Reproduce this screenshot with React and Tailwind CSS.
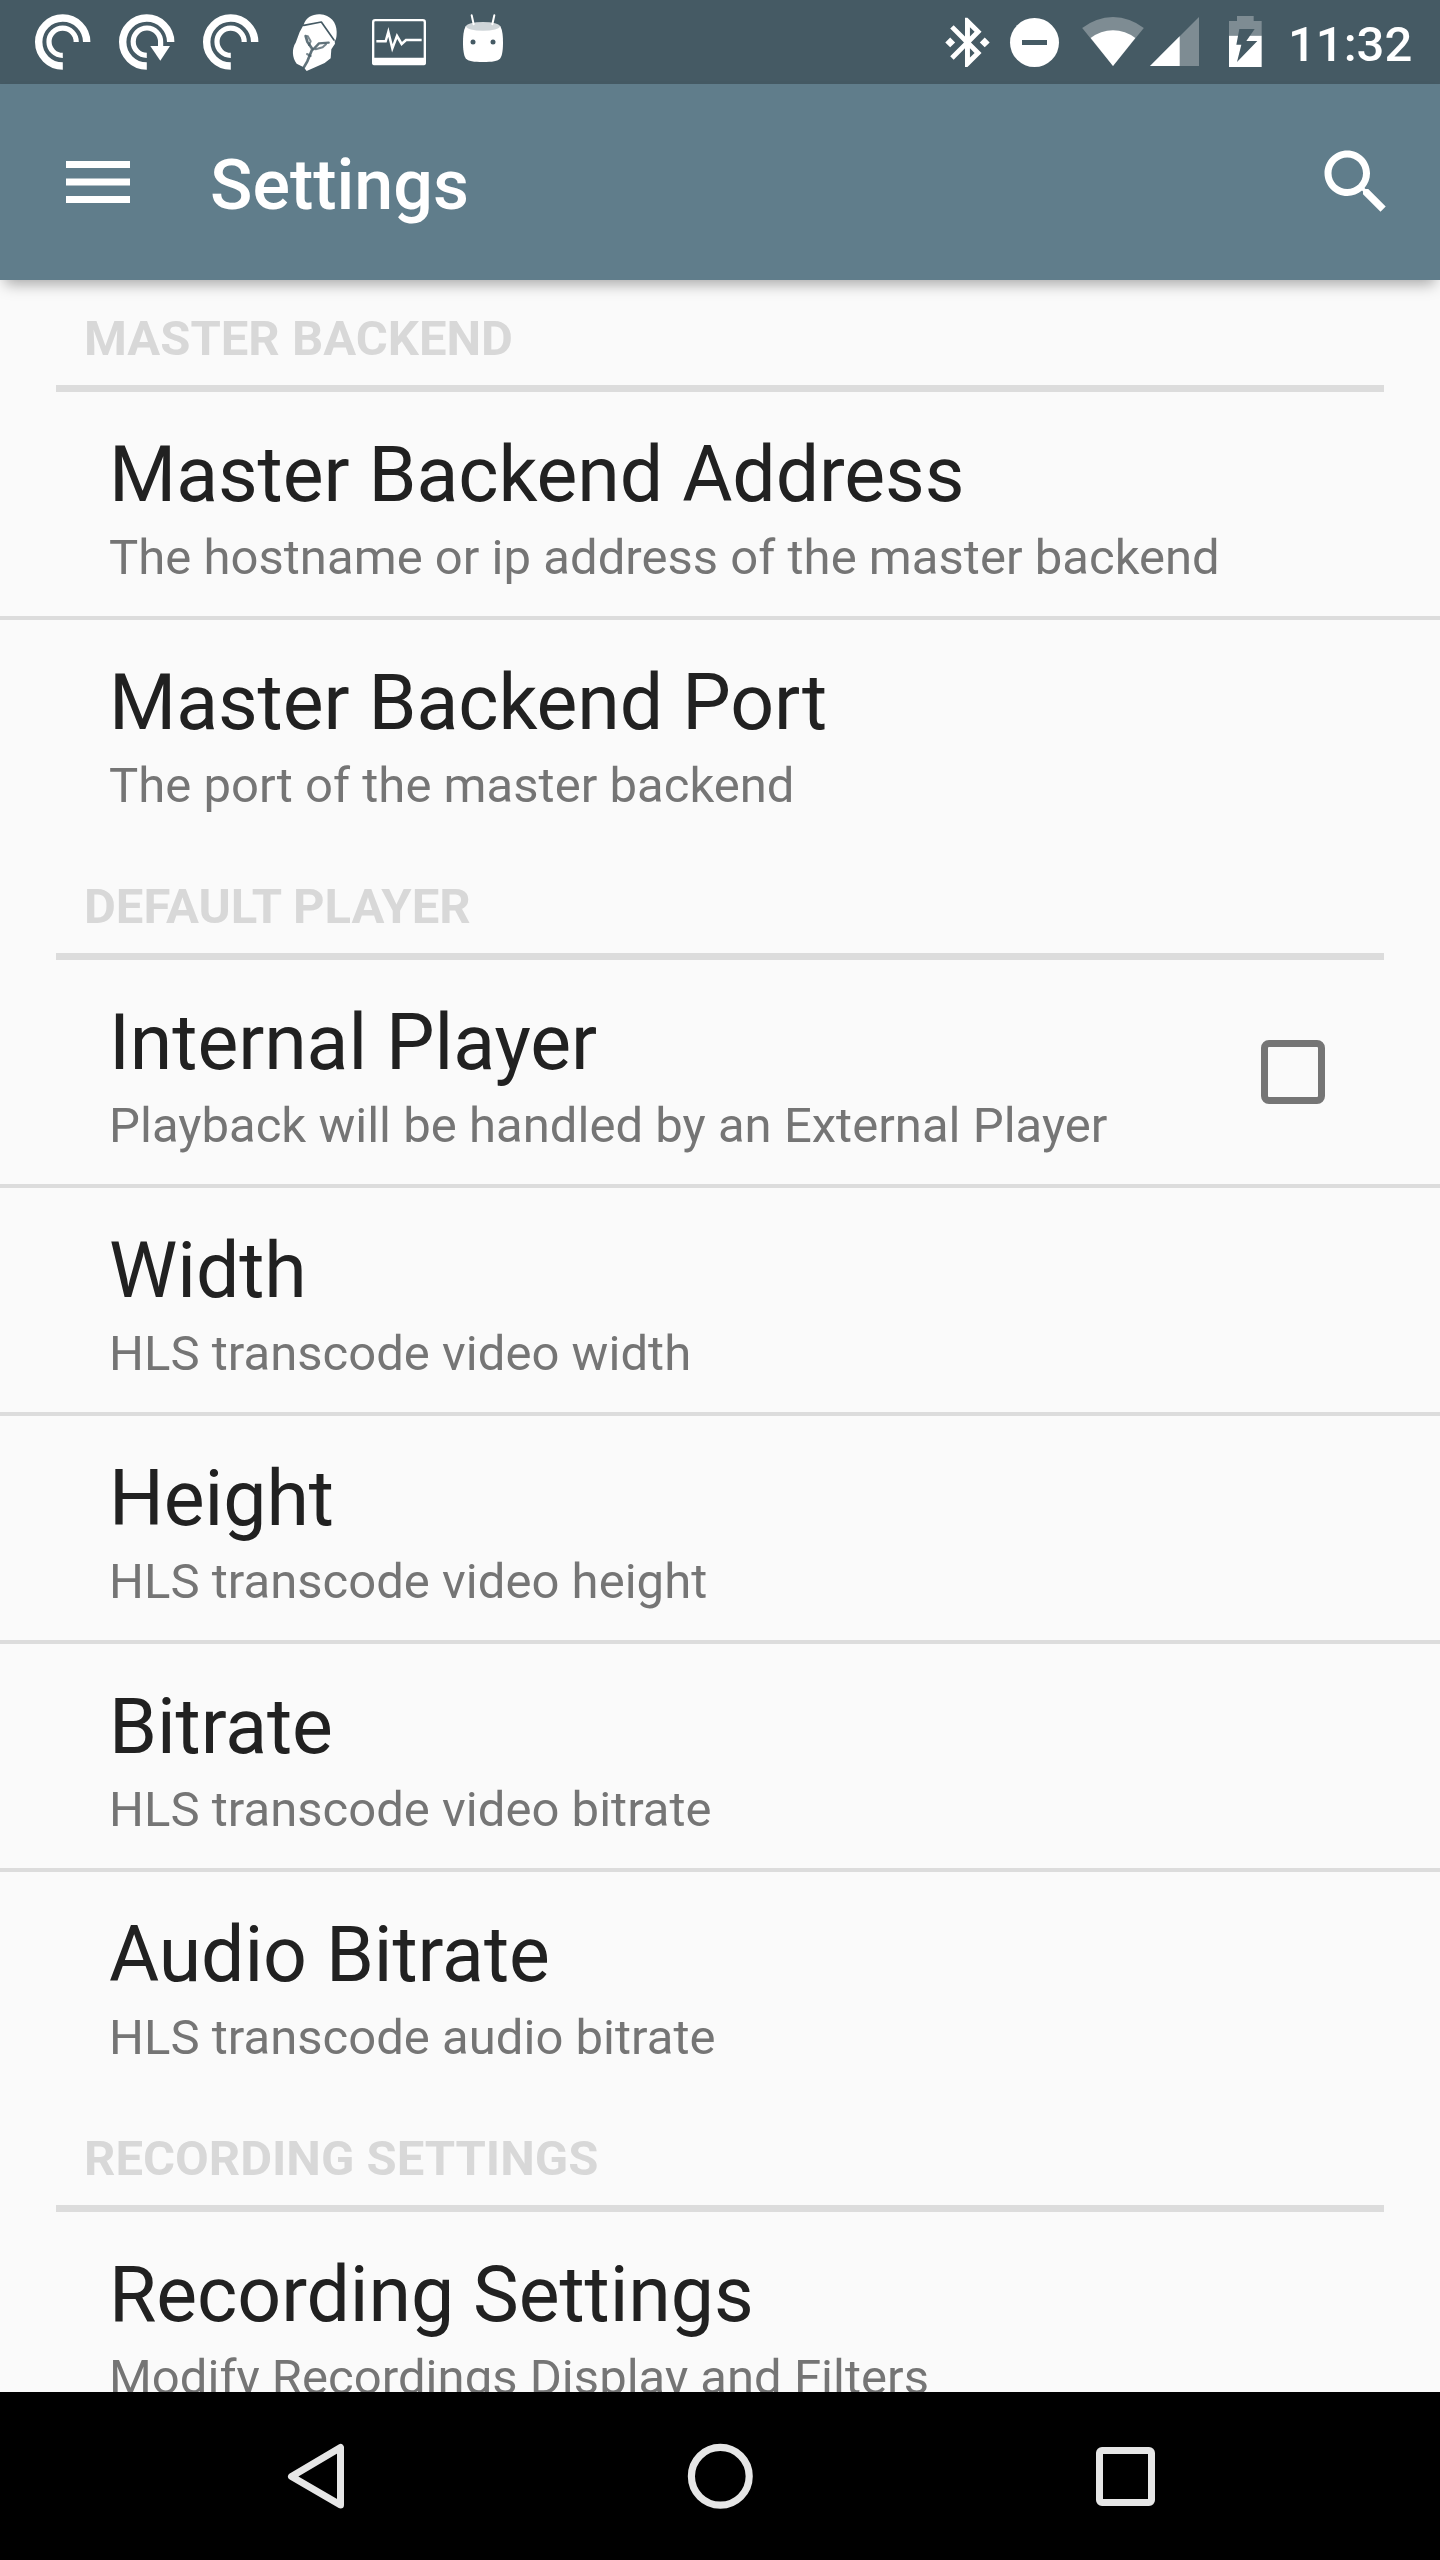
const BAR = '#455a64';
const DIM = '#7e8c93';

function CastRing({ arrow }) {
  return (
    <svg className="h-[84px] w-[84px]" viewBox="0 0 84 84" fill="none" stroke="#fff">
      <path d="M65.7 42A24 24 0 1 0 41.8 66" strokeWidth="7.4" />
      <path d={arrow ? 'M55.6 48V42A13.7 13.7 0 1 0 41.8 55.4' : 'M55.2 42A13.6 13.6 0 1 0 41.8 55.4'} strokeWidth="5.2" />
      {arrow && <path d="M45.3 46H65L55.3 60.8Z" fill="#fff" stroke="none" />}
    </svg>
  );
}

function HelmetIcon() {
  return (
    <svg className="h-[84px] w-[84px]" viewBox="9 0 252 252">
      <path
        fill="#fff"
        d="M101 74C108 52 128 42 150 43C182 45 200 68 200 95C200 110 199 117 194 124L195 131L184 148L182 175L164 189L110 213L101 202L80 191C66 172 65 146 77 128L89 96Z"
      />
      <g fill="none" stroke={BAR} strokeLinejoin="round" strokeLinecap="round">
        <path d="M101 76L154 66L192 120" strokeWidth="5" />
        <path d="M107 108L112 125L127 147L112 184L101 203" strokeWidth="8" opacity=".85" />
        <path d="M113 108L122 124L117 135" strokeWidth="6" opacity=".7" />
        <path d="M130 148L147 130L176 128" strokeWidth="7" opacity=".85" />
        <path d="M137 148L158 142L168 133" strokeWidth="6" opacity=".75" />
        <path d="M111 162L122 168" strokeWidth="6" opacity=".7" />
      </g>
    </svg>
  );
}

function MonitorIcon() {
  return (
    <svg className="h-[84px] w-[84px]" viewBox="261 0 252 252">
      <rect x="309.5" y="60.500" width="155" height="132" rx="6" fill="none" stroke="#fff" strokeWidth="7" />
      <rect x="307" y="173" width="160" height="22" rx="5" fill="#fff" />
      <path d="M319 124H347L355 96L367 145L381 108L395 132L408 120H455" fill="none" stroke="#fff" strokeWidth="7.500" />
    </svg>
  );
}

function RobotIcon() {
  return (
    <svg className="h-[84px] w-[84px]" viewBox="513 0 252 252">
      <path d="M587 78C580 92 579 110 579 128C579 148 581 165 587 175C594 185 612 186 639 186C666 186 684 185 691 175C697 165 699 148 699 128C699 110 698 92 691 78Z" fill="#fff" />
      <ellipse cx="639" cy="79" rx="51" ry="13" fill="#cfd5d8" />
      <path d="M605 46L611 73M673 46L667 73" stroke="#fff" strokeWidth="6" strokeLinecap="round" />
      <circle cx="609" cy="126" r="7.500" fill={BAR} />
      <circle cx="669" cy="126" r="7.500" fill={BAR} />
    </svg>
  );
}

function StatusBar() {
  return (
    <div className="flex h-[84px] shrink-0 items-center bg-[#455a64] pl-[21px] text-white">
      <CastRing />
      <CastRing arrow />
      <CastRing />
      <HelmetIcon />
      <MonitorIcon />
      <RobotIcon />
      <svg className="ml-[420px] h-[84px] w-[45px]" viewBox="75 0 135 252" fill="#fff">
        <path
          transform="translate(53.6 38.4) scale(7.4)"
          d="M7 12l-2-2-2 2 2 2 2-2zm10.710-4.290L12 2h-1v7.590L6.410 5 5 6.410 10.590 12 5 17.590 6.410 19 11 14.410V22h1l5.710-5.710-4.300-4.290 4.300-4.290zM13 5.830l1.880 1.880L13 9.590V5.830zm1.880 10.460L13 18.170v-3.760l1.880 1.880zM19 10l-2 2 2 2 2-2-2-2z"
        />
      </svg>
      <svg className="ml-[19px] h-[84px] w-[51px]" viewBox="267 0 153 252">
        <circle cx="343.500" cy="127.500" r="73.500" fill="#fff" />
        <path d="M306 120H381V135H306Z" fill={BAR} />
      </svg>
      <svg className="ml-[21px] h-[84px] w-[64px]" viewBox="483 0 192 252">
        <path d="M579 198L486.500 84A147 147 0 0 1 671.500 84Z" fill={DIM} />
        <path d="M579 198L512 114A108 108 0 0 1 646 114Z" fill="#fff" />
      </svg>
      <svg className="ml-[4px] h-[84px] w-[50px]" viewBox="687 0 150 252">
        <path d="M690 198L837 51V198Z" fill={DIM} />
        <path d="M690 198L779 109V198Z" fill="#fff" />
      </svg>
      <svg className="ml-[29px] h-[84px] w-[35px]" viewBox="144 0 105 252">
        <path d="M147 107V63H171V48H221V63H245V107Z" fill={DIM} />
        <path d="M147 107H245V201H147Z" fill="#fff" />
        <path d="M178 87H224L199 123H232L171 186L184 134H169Z" fill={BAR} />
      </svg>
      <span className="ml-[25px] mt-[6px] text-[49px] leading-[58px] font-medium">11:32</span>
    </div>
  );
}

function Toolbar() {
  return (
    <header className="z-10 flex h-[196px] shrink-0 items-center bg-[#607d8b] pr-[42px] pl-[66px] text-white shadow-[0_9px_14px_-5px_rgba(0,0,0,0.34)]">
      <svg className="h-[42px] w-[64px]" viewBox="0 0 64 42" fill="#fff">
        <path d="M0 0H64V7H0ZM0 17.500H64V24.500H0ZM0 35H64V42H0Z" />
      </svg>
      <h1 className="ml-[80px] mt-[6px] text-[70px] leading-[82px] font-medium">Settings</h1>
      <svg className="ml-auto h-[84px] w-[84px]" viewBox="0 0 24 24" fill="#fff">
        <path d="M15.500 14h-.790l-.280-.270C15.410 12.590 16 11.110 16 9.500 16 5.910 13.090 3 9.500 3S3 5.910 3 9.500 5.910 16 9.500 16c1.610 0 3.090-.590 4.230-1.570l.270.280v.790l5 4.990L20.490 19l-4.990-5zm-6 0C7.010 14 5 11.990 5 9.500S7.010 5 9.500 5 14 7.010 14 9.500 11.990 14 9.500 14z" />
      </svg>
    </header>
  );
}

const sections = [
  {
    name: 'MASTER BACKEND',
    items: [
      { title: 'Master Backend Address', summary: 'The hostname or ip address of the master backend' },
      { title: 'Master Backend Port', summary: 'The port of the master backend' },
    ],
  },
  {
    name: 'DEFAULT PLAYER',
    items: [
      { title: 'Internal Player', summary: 'Playback will be handled by an External Player', checkbox: true },
      { title: 'Width', summary: 'HLS transcode video width' },
      { title: 'Height', summary: 'HLS transcode video height' },
      { title: 'Bitrate', summary: 'HLS transcode video bitrate' },
      { title: 'Audio Bitrate', summary: 'HLS transcode audio bitrate' },
    ],
  },
  {
    name: 'RECORDING SETTINGS',
    items: [{ title: 'Recording Settings', summary: 'Modify Recordings Display and Filters' }],
  },
];

function Preference({ title, summary, checkbox }) {
  return (
    <li className="flex h-[228px] items-center justify-between border-b-4 border-[#dcdcdc] pr-[115px] pl-[109px] last:border-transparent">
      <div className="pt-[8px] whitespace-nowrap">
        <div className="text-[77px] leading-[90px] tracking-[-0.08px] text-[#212121]">{title}</div>
        <div className="mt-[9px] text-[49px] leading-[57px] tracking-[0.03px] text-[#757575]">{summary}</div>
      </div>
      {checkbox && <span role="checkbox" aria-checked="false" className="size-[64px] rounded-[8px] border-7 border-[#757575]" />}
    </li>
  );
}

function NavigationBar() {
  return (
    <nav className="flex h-[168px] shrink-0 items-center bg-black pl-[287px]">
      <svg className="h-[66px] w-[58px]" viewBox="0 0 58 66" fill="none" stroke="#e6e6e6" strokeWidth="7" strokeLinejoin="round">
        <path d="M53.500 4.500V62L4.500 33.500Z" />
      </svg>
      <svg className="ml-[342px] h-[66px] w-[66px]" viewBox="0 0 66 66" fill="none" stroke="#e6e6e6" strokeWidth="7.200">
        <circle cx="33.300" cy="33.300" r="28.900" />
      </svg>
      <span className="ml-[343px] size-[59px] rounded-[6px] border-7 border-[#e6e6e6]" />
    </nav>
  );
}

export default function App() {
  return (
    <div className="flex h-[2560px] w-[1440px] flex-col overflow-hidden bg-[#fafafa] font-['Roboto',sans-serif]">
      <StatusBar />
      <Toolbar />
      <main className="min-h-0 flex-1 overflow-hidden">
        {sections.map((section) => (
          <section key={section.name}>
            <h2 className="mx-[56px] h-[112px] border-b-7 border-[#dcdcdc] pt-[30px] pl-[28px] text-[49px] leading-[58px] font-bold text-[#d8d8d8]">
              {section.name}
            </h2>
            <ul>
              {section.items.map((item) => (
                <Preference key={item.title} {...item} />
              ))}
            </ul>
          </section>
        ))}
      </main>
      <NavigationBar />
    </div>
  );
}
